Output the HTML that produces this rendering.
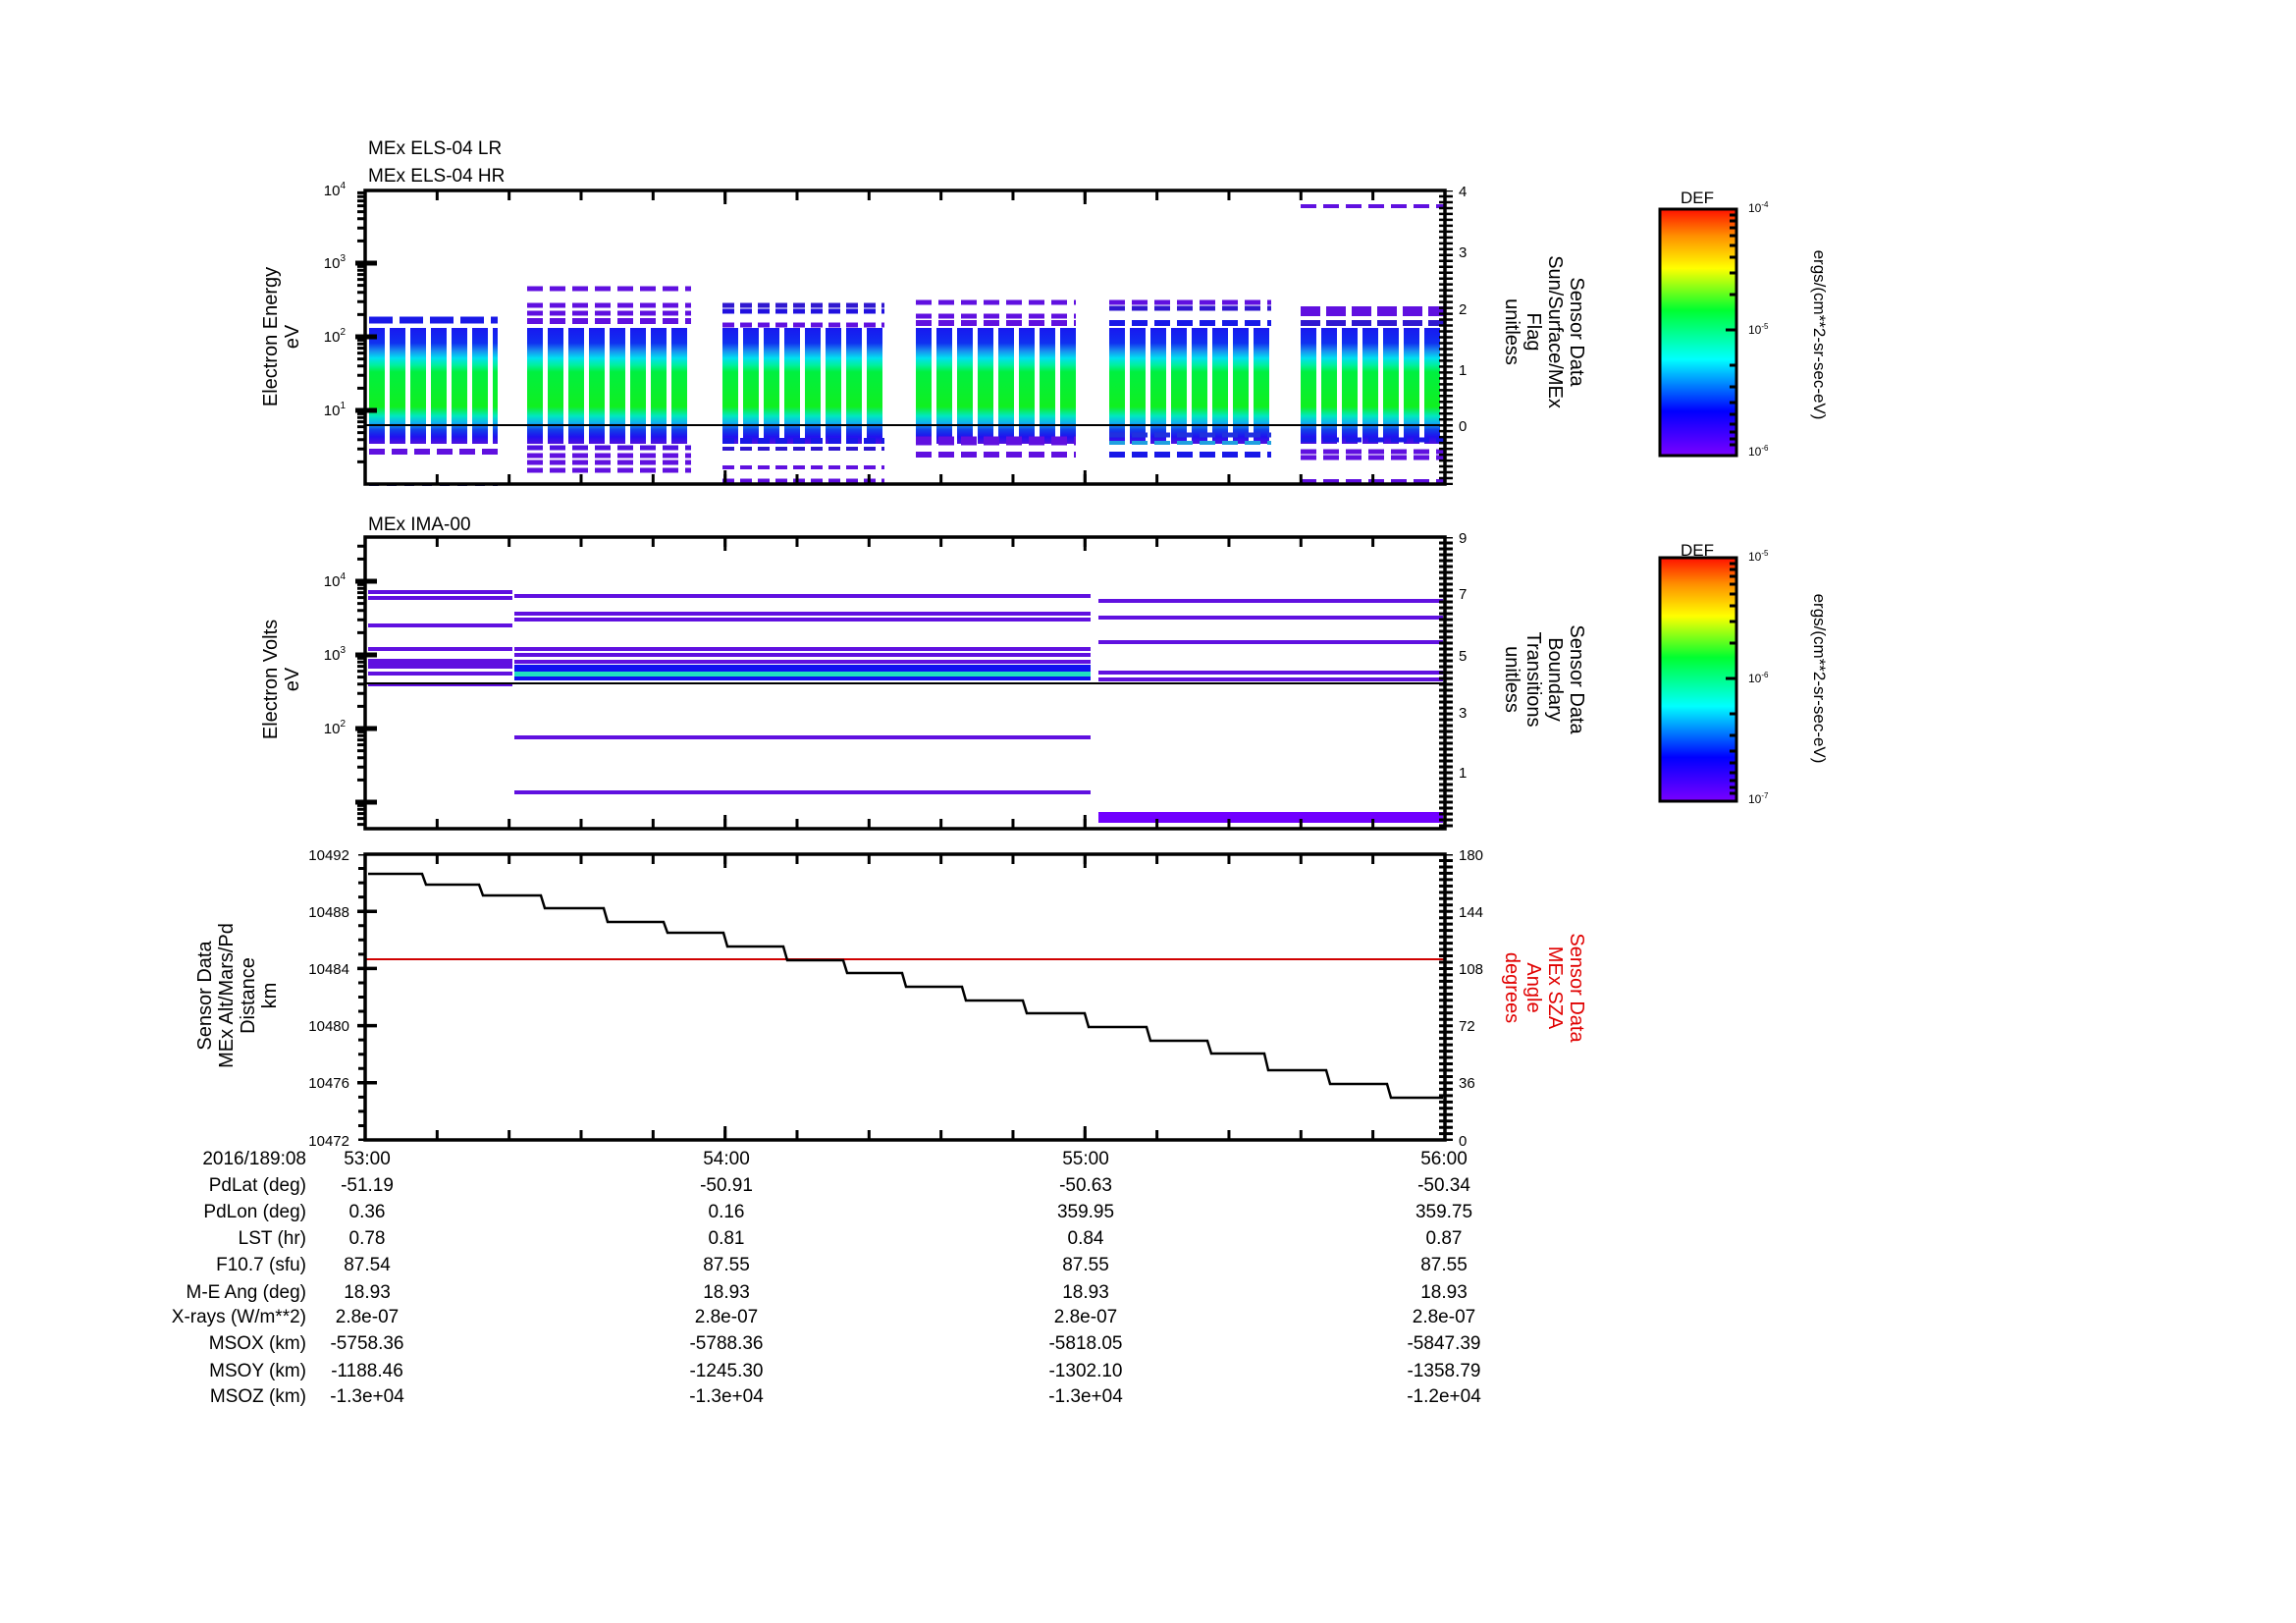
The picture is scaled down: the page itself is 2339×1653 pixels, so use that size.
<!DOCTYPE html>
<html><head><meta charset="utf-8"><style>
html,body{margin:0;padding:0;background:#fff;}
svg{display:block;font-family:"Liberation Sans",sans-serif;}
</style></head><body>
<svg width="2339" height="1653" viewBox="0 0 2339 1653" xmlns="http://www.w3.org/2000/svg">
<defs>
<linearGradient id="blk" gradientUnits="userSpaceOnUse" x1="0" y1="334" x2="0" y2="452">
<stop offset="0" stop-color="#1818f0"/><stop offset="0.13" stop-color="#1030f0"/>
<stop offset="0.2" stop-color="#1890f0"/><stop offset="0.26" stop-color="#00e0f0"/>
<stop offset="0.32" stop-color="#00f0a0"/><stop offset="0.38" stop-color="#00f040"/>
<stop offset="0.68" stop-color="#10f020"/><stop offset="0.76" stop-color="#00e8c0"/>
<stop offset="0.82" stop-color="#10b0f0"/><stop offset="0.88" stop-color="#1040e8"/>
<stop offset="0.94" stop-color="#2010f0"/><stop offset="1" stop-color="#5010e0"/>
</linearGradient>
<linearGradient id="cb" x1="0" y1="1" x2="0" y2="0">
<stop offset="0" stop-color="#7a00ff"/><stop offset="0.18" stop-color="#0000ff"/>
<stop offset="0.39" stop-color="#00ffff"/><stop offset="0.59" stop-color="#00ff30"/>
<stop offset="0.76" stop-color="#ffff00"/><stop offset="0.89" stop-color="#ff9000"/>
<stop offset="1" stop-color="#ff1000"/>
</linearGradient>
</defs>

<!-- Panel 1 data -->
<g stroke="url(#blk)" stroke-width="118" stroke-dasharray="16 5">
<line x1="376" x2="507" y1="393" y2="393"/>
<line x1="537" x2="704" y1="393" y2="393"/>
<line x1="736" x2="901" y1="393" y2="393"/>
<line x1="933" x2="1096" y1="393" y2="393"/>
<line x1="1130" x2="1295" y1="393" y2="393"/>
<line x1="1325" x2="1471" y1="393" y2="393"/>
</g>
<g fill="#fff">
<rect x="370" y="452" width="1100" height="4"/>
</g>
<g stroke-dasharray="16 7">
<line x1="376" x2="507" y1="326" y2="326" stroke="#1818e8" stroke-width="7" stroke-dasharray="24 7"/>
<line x1="376" x2="507" y1="460" y2="460" stroke="#6010e0" stroke-width="6"/>
<line x1="376" x2="507" y1="494" y2="494" stroke="#3030a0" stroke-width="2" stroke-dasharray="10 8"/>
<line x1="537" x2="704" y1="294" y2="294" stroke="#6010e0" stroke-width="5"/>
<line x1="537" x2="704" y1="311" y2="311" stroke="#6010e0" stroke-width="5"/>
<line x1="537" x2="704" y1="319" y2="319" stroke="#6010e0" stroke-width="5"/>
<line x1="537" x2="704" y1="327" y2="327" stroke="#6010e0" stroke-width="6"/>
<line x1="537" x2="704" y1="456" y2="456" stroke="#5010e0" stroke-width="5"/>
<line x1="537" x2="704" y1="464" y2="464" stroke="#6010e0" stroke-width="5"/>
<line x1="537" x2="704" y1="471" y2="471" stroke="#6010e0" stroke-width="5"/>
<line x1="537" x2="704" y1="479" y2="479" stroke="#6010e0" stroke-width="5"/>
<line x1="736" x2="901" y1="311" y2="311" stroke="#3018d0" stroke-width="5" stroke-dasharray="12 6"/>
<line x1="736" x2="901" y1="317" y2="317" stroke="#2010e0" stroke-width="5" stroke-dasharray="12 6"/>
<line x1="736" x2="901" y1="331" y2="331" stroke="#6010e0" stroke-width="5" stroke-dasharray="12 6"/>
<line x1="736" x2="901" y1="449" y2="449" stroke="#1818e8" stroke-width="6" stroke-dasharray="12 6"/>
<line x1="736" x2="901" y1="457" y2="457" stroke="#3018d0" stroke-width="4" stroke-dasharray="12 6"/>
<line x1="736" x2="901" y1="476" y2="476" stroke="#6010e0" stroke-width="4" stroke-dasharray="12 6"/>
<line x1="736" x2="901" y1="491" y2="491" stroke="#6010e0" stroke-width="7" stroke-dasharray="12 6"/>
<line x1="933" x2="1096" y1="308" y2="308" stroke="#6010e0" stroke-width="5"/>
<line x1="933" x2="1096" y1="322" y2="322" stroke="#6010e0" stroke-width="5"/>
<line x1="933" x2="1096" y1="329" y2="329" stroke="#6010e0" stroke-width="6"/>
<line x1="933" x2="1096" y1="449" y2="449" stroke="#6010e0" stroke-width="9"/>
<line x1="933" x2="1096" y1="463" y2="463" stroke="#6010e0" stroke-width="6"/>
<line x1="1130" x2="1295" y1="308" y2="308" stroke="#6010e0" stroke-width="5"/>
<line x1="1130" x2="1295" y1="314" y2="314" stroke="#3018d0" stroke-width="5"/>
<line x1="1130" x2="1295" y1="329" y2="329" stroke="#1818e8" stroke-width="6"/>
<line x1="1130" x2="1295" y1="443" y2="443" stroke="#2030e0" stroke-width="5"/>
<line x1="1130" x2="1295" y1="451" y2="451" stroke="#20a0e0" stroke-width="4"/>
<line x1="1130" x2="1295" y1="463" y2="463" stroke="#1818e8" stroke-width="6"/>
<line x1="1325" x2="1471" y1="210" y2="210" stroke="#6010e0" stroke-width="4"/>
<line x1="1325" x2="1471" y1="317" y2="317" stroke="#6010e0" stroke-width="10" stroke-dasharray="20 6"/>
<line x1="1325" x2="1471" y1="329" y2="329" stroke="#3018d0" stroke-width="6" stroke-dasharray="20 6"/>
<line x1="1325" x2="1471" y1="448" y2="448" stroke="#1818e8" stroke-width="5"/>
<line x1="1325" x2="1471" y1="460" y2="460" stroke="#6010e0" stroke-width="5"/>
<line x1="1325" x2="1471" y1="466" y2="466" stroke="#6010e0" stroke-width="5"/>
<line x1="1325" x2="1471" y1="490" y2="490" stroke="#6010e0" stroke-width="4"/>
</g>
<line x1="372" x2="1472" y1="433" y2="433" stroke="#000" stroke-width="2"/>

<!-- Panel 2 data -->
<g fill="#6010e0">
<rect x="375" y="601" width="147" height="4"/><rect x="375" y="607" width="147" height="4"/>
<rect x="375" y="635" width="147" height="4"/><rect x="375" y="659" width="147" height="4"/>
<rect x="375" y="671" width="147" height="10"/><rect x="375" y="684" width="147" height="4"/>
<rect x="375" y="695" width="147" height="4"/>
<rect x="524" y="605" width="587" height="4"/><rect x="524" y="623" width="587" height="4"/>
<rect x="524" y="629" width="587" height="4"/><rect x="524" y="659" width="587" height="4"/>
<rect x="524" y="665" width="587" height="4"/><rect x="524" y="672" width="587" height="4"/>
<rect x="524" y="749" width="587" height="4"/><rect x="524" y="805" width="587" height="4"/>
<rect x="1119" y="610" width="351" height="4"/><rect x="1119" y="627" width="351" height="4"/>
<rect x="1119" y="652" width="351" height="4"/><rect x="1119" y="683" width="351" height="4"/>
<rect x="1119" y="690" width="351" height="4"/>
<rect x="1119" y="827" width="351" height="11" fill="#7000ff"/>
</g>
<rect x="524" y="677" width="587" height="7" fill="#1010f0"/>
<rect x="524" y="684" width="587" height="5" fill="#20e0c0"/>
<rect x="524" y="689" width="587" height="4" fill="#1010f0"/>
<line x1="372" x2="1472" y1="696" y2="696" stroke="#000" stroke-width="2"/>

<!-- Axes panels 1-2 -->
<g fill="none" stroke="#000">
<rect x="372" y="194" width="1100" height="299" stroke-width="3.5"/>
<rect x="372" y="547" width="1100" height="297" stroke-width="3.5"/>
<g stroke-width="10" stroke-dasharray="3 70.33" stroke-dashoffset="1.5">
<line x1="372" x2="1475" y1="199" y2="199"/><line x1="372" x2="1475" y1="488" y2="488"/>
<line x1="372" x2="1475" y1="552" y2="552"/><line x1="372" x2="1475" y1="839" y2="839"/>
</g>
<path stroke-width="3" d="M738.7 194v14M1105.3 194v14M738.7 493v-14M1105.3 493v-14M738.7 547v14M1105.3 547v14M738.7 844v-14M1105.3 844v-14"/>
<line x1="1473" x2="1473" y1="194" y2="494" stroke-width="14" stroke-dasharray="2.5 3.48" stroke-dashoffset="1.25"/>
<line x1="1473" x2="1473" y1="547" y2="845" stroke-width="14" stroke-dasharray="3 3" stroke-dashoffset="1.5"/>
<path stroke-width="3" d="M364 470.4h8M364 457.2h8M364 447.8h8M364 440.6h8M364 434.6h8M364 429.6h8M364 425.3h8M364 421.4h8
M364 395.4h8M364 382.2h8M364 372.8h8M364 365.6h8M364 359.6h8M364 354.6h8M364 350.3h8M364 346.4h8
M364 320.4h8M364 307.2h8M364 297.8h8M364 290.6h8M364 284.6h8M364 279.6h8M364 275.3h8M364 271.4h8
M364 245.4h8M364 232.2h8M364 222.8h8M364 215.6h8M364 209.6h8M364 204.6h8M364 200.3h8M364 196.4h8"/>
<path stroke-width="5" d="M362 418h22M362 343h22M362 268h22"/>
<path stroke-width="3" d="M364 839.6h8M364 833.6h8M364 828.6h8M364 824.3h8M364 820.4h8
M364 794.4h8M364 781.2h8M364 771.8h8M364 764.6h8M364 758.6h8M364 753.6h8M364 749.3h8M364 745.4h8
M364 719.4h8M364 706.2h8M364 696.8h8M364 689.6h8M364 683.6h8M364 678.6h8M364 674.3h8M364 670.4h8
M364 644.4h8M364 631.2h8M364 621.8h8M364 614.6h8M364 608.6h8M364 603.6h8M364 599.3h8M364 595.4h8
M364 569.4h8M364 556.2h8"/>
<path stroke-width="5" d="M362 817h22M362 742h22M362 667h22M362 592h22"/>
</g>

<!-- Panel 3 (shifted) -->
<g transform="translate(0,6)">
<line x1="372" x2="1472" y1="971" y2="971" stroke="#d00000" stroke-width="2"/>
<path fill="none" stroke="#000" stroke-width="2.5" d="M375 884 L430 884 L434 895 L488 895 L492 906 L551 906 L555 919 L615 919 L619 933 L676 933 L680 944 L737 944 L741 958 L798 958 L802 972 L859 972 L863 985 L919 985 L923 999 L980 999 L984 1013 L1042 1013 L1046 1026 L1105 1026 L1109 1040 L1168 1040 L1172 1054 L1230 1054 L1234 1067 L1288 1067 L1292 1084 L1351 1084 L1355 1098 L1413 1098 L1417 1112 L1470 1112"/>
<g fill="none" stroke="#000">
<rect x="372" y="864" width="1100" height="291" stroke-width="3.5"/>
<g stroke-width="10" stroke-dasharray="3 70.33" stroke-dashoffset="1.5">
<line x1="372" x2="1475" y1="869" y2="869"/><line x1="372" x2="1475" y1="1150" y2="1150"/>
</g>
<path stroke-width="3" d="M738.7 864v14M1105.3 864v14M738.7 1155v-14M1105.3 1155v-14"/>
<line x1="1473" x2="1473" y1="864" y2="1156" stroke-width="14" stroke-dasharray="3 3.47" stroke-dashoffset="1.5"/>
<line x1="369" x2="369" y1="864" y2="1156" stroke-width="8" stroke-dasharray="3 11.55" stroke-dashoffset="1.5"/>
<path stroke-width="3.5" d="M364 922.2h20M364 980.4h20M364 1038.6h20M364 1096.8h20"/>
</g>
<g font-size="15" fill="#000" text-anchor="end">
<text x="356" y="870">10492</text><text x="356" y="928">10488</text><text x="356" y="986">10484</text>
<text x="356" y="1044">10480</text><text x="356" y="1102">10476</text><text x="356" y="1161">10472</text>
</g>
<g font-size="15" fill="#000">
<text x="1486" y="870">180</text><text x="1486" y="928">144</text><text x="1486" y="986">108</text><text x="1486" y="1044">72</text><text x="1486" y="1102">36</text><text x="1486" y="1161">0</text>
</g>
<g font-size="20" fill="#000" text-anchor="middle">
<text transform="translate(215,1008) rotate(-90)">Sensor Data</text>
<text transform="translate(237,1008) rotate(-90)">MEx Alt/Mars/Pd</text>
<text transform="translate(259,1008) rotate(-90)">Distance</text>
<text transform="translate(281,1008) rotate(-90)">km</text>
<g fill="#e00000">
<text transform="translate(1600,1000) rotate(90)">Sensor Data</text>
<text transform="translate(1578,1000) rotate(90)">MEx SZA</text>
<text transform="translate(1556,1000) rotate(90)">Angle</text>
<text transform="translate(1534,1000) rotate(90)">degrees</text>
</g>
</g>
<g font-size="19" fill="#000">
<g text-anchor="end">
<text x="312" y="1180">2016/189:08</text><text x="312" y="1207">PdLat (deg)</text><text x="312" y="1234">PdLon (deg)</text>
<text x="312" y="1261">LST (hr)</text><text x="312" y="1288">F10.7 (sfu)</text><text x="312" y="1316">M-E Ang (deg)</text>
<text x="312" y="1341">X-rays (W/m**2)</text><text x="312" y="1368">MSOX (km)</text><text x="312" y="1396">MSOY (km)</text><text x="312" y="1422">MSOZ (km)</text>
</g>
<g text-anchor="middle">
<text x="374" y="1180">53:00</text><text x="740" y="1180">54:00</text><text x="1106" y="1180">55:00</text><text x="1471" y="1180">56:00</text>
<text x="374" y="1207">-51.19</text><text x="740" y="1207">-50.91</text><text x="1106" y="1207">-50.63</text><text x="1471" y="1207">-50.34</text>
<text x="374" y="1234">0.36</text><text x="740" y="1234">0.16</text><text x="1106" y="1234">359.95</text><text x="1471" y="1234">359.75</text>
<text x="374" y="1261">0.78</text><text x="740" y="1261">0.81</text><text x="1106" y="1261">0.84</text><text x="1471" y="1261">0.87</text>
<text x="374" y="1288">87.54</text><text x="740" y="1288">87.55</text><text x="1106" y="1288">87.55</text><text x="1471" y="1288">87.55</text>
<text x="374" y="1316">18.93</text><text x="740" y="1316">18.93</text><text x="1106" y="1316">18.93</text><text x="1471" y="1316">18.93</text>
<text x="374" y="1341">2.8e-07</text><text x="740" y="1341">2.8e-07</text><text x="1106" y="1341">2.8e-07</text><text x="1471" y="1341">2.8e-07</text>
<text x="374" y="1368">-5758.36</text><text x="740" y="1368">-5788.36</text><text x="1106" y="1368">-5818.05</text><text x="1471" y="1368">-5847.39</text>
<text x="374" y="1396">-1188.46</text><text x="740" y="1396">-1245.30</text><text x="1106" y="1396">-1302.10</text><text x="1471" y="1396">-1358.79</text>
<text x="374" y="1422">-1.3e+04</text><text x="740" y="1422">-1.3e+04</text><text x="1106" y="1422">-1.3e+04</text><text x="1471" y="1422">-1.2e+04</text>
</g>
</g>
</g>

<g font-size="19" fill="#000">
<text x="375" y="157">MEx ELS-04 LR</text>
<text x="375" y="185">MEx ELS-04 HR</text>
<text x="375" y="540">MEx IMA-00</text>
</g>
<g font-size="15" fill="#000" text-anchor="end">
<text x="352" y="199">10<tspan dy="-7" font-size="10">4</tspan></text>
<text x="352" y="273">10<tspan dy="-7" font-size="10">3</tspan></text>
<text x="352" y="348">10<tspan dy="-7" font-size="10">2</tspan></text>
<text x="352" y="423">10<tspan dy="-7" font-size="10">1</tspan></text>
<text x="352" y="597">10<tspan dy="-7" font-size="10">4</tspan></text>
<text x="352" y="672">10<tspan dy="-7" font-size="10">3</tspan></text>
<text x="352" y="747">10<tspan dy="-7" font-size="10">2</tspan></text>
</g>
<g font-size="15" fill="#000">
<text x="1486" y="200">4</text><text x="1486" y="262">3</text><text x="1486" y="320">2</text><text x="1486" y="382">1</text><text x="1486" y="439">0</text>
<text x="1486" y="553">9</text><text x="1486" y="610">7</text><text x="1486" y="673">5</text><text x="1486" y="731">3</text><text x="1486" y="792">1</text>
</g>
<g font-size="20" fill="#000" text-anchor="middle">
<text transform="translate(282,343) rotate(-90)">Electron Energy</text>
<text transform="translate(304,343) rotate(-90)">eV</text>
<text transform="translate(282,692) rotate(-90)">Electron Volts</text>
<text transform="translate(304,692) rotate(-90)">eV</text>
<text transform="translate(1600,338) rotate(90)">Sensor Data</text>
<text transform="translate(1578,338) rotate(90)">Sun/Surface/MEx</text>
<text transform="translate(1556,338) rotate(90)">Flag</text>
<text transform="translate(1534,338) rotate(90)">unitless</text>
<text transform="translate(1600,692) rotate(90)">Sensor Data</text>
<text transform="translate(1578,692) rotate(90)">Boundary</text>
<text transform="translate(1556,692) rotate(90)">Transitions</text>
<text transform="translate(1534,692) rotate(90)">unitless</text>
</g>

<!-- Colorbars -->
<g transform="translate(10,0)">
<g font-size="17" fill="#000" text-anchor="middle">
<text x="1719" y="207">DEF</text>
<text transform="translate(1838,341) rotate(90)">ergs/(cm**2-sr-sec-eV)</text>
</g>
<rect x="1681" y="213" width="78" height="251" fill="url(#cb)" stroke="#000" stroke-width="3"/>
<path stroke="#000" stroke-width="3" d="M1748 336h11M1752 300h7M1752 278h7M1752 262h7M1752 250h7M1752 240h7M1752 232h7M1752 225h7M1752 219h7
M1752 372h7M1752 394h7M1752 410h7M1752 422h7M1752 432h7M1752 440h7M1752 447h7M1752 453h7"/>
<g font-size="12" fill="#000">
<text x="1771" y="216">10<tspan dy="-5" font-size="8">-4</tspan></text>
<text x="1771" y="340">10<tspan dy="-5" font-size="8">-5</tspan></text>
<text x="1771" y="464">10<tspan dy="-5" font-size="8">-6</tspan></text>
</g>
</g>
<g transform="translate(10,5)">
<g font-size="17" fill="#000" text-anchor="middle">
<text x="1719" y="561">DEF</text>
<text transform="translate(1838,686) rotate(90)">ergs/(cm**2-sr-sec-eV)</text>
</g>
<rect x="1681" y="563" width="78" height="248" fill="url(#cb)" stroke="#000" stroke-width="3"/>
<path stroke="#000" stroke-width="3" d="M1748 686h11M1752 650h7M1752 628h7M1752 612h7M1752 600h7M1752 590h7M1752 582h7M1752 575h7M1752 569h7
M1752 722h7M1752 744h7M1752 760h7M1752 772h7M1752 782h7M1752 790h7M1752 797h7M1752 803h7"/>
<g font-size="12" fill="#000">
<text x="1771" y="566">10<tspan dy="-5" font-size="8">-5</tspan></text>
<text x="1771" y="690">10<tspan dy="-5" font-size="8">-6</tspan></text>
<text x="1771" y="813">10<tspan dy="-5" font-size="8">-7</tspan></text>
</g>
</g>
</svg>
</body></html>
